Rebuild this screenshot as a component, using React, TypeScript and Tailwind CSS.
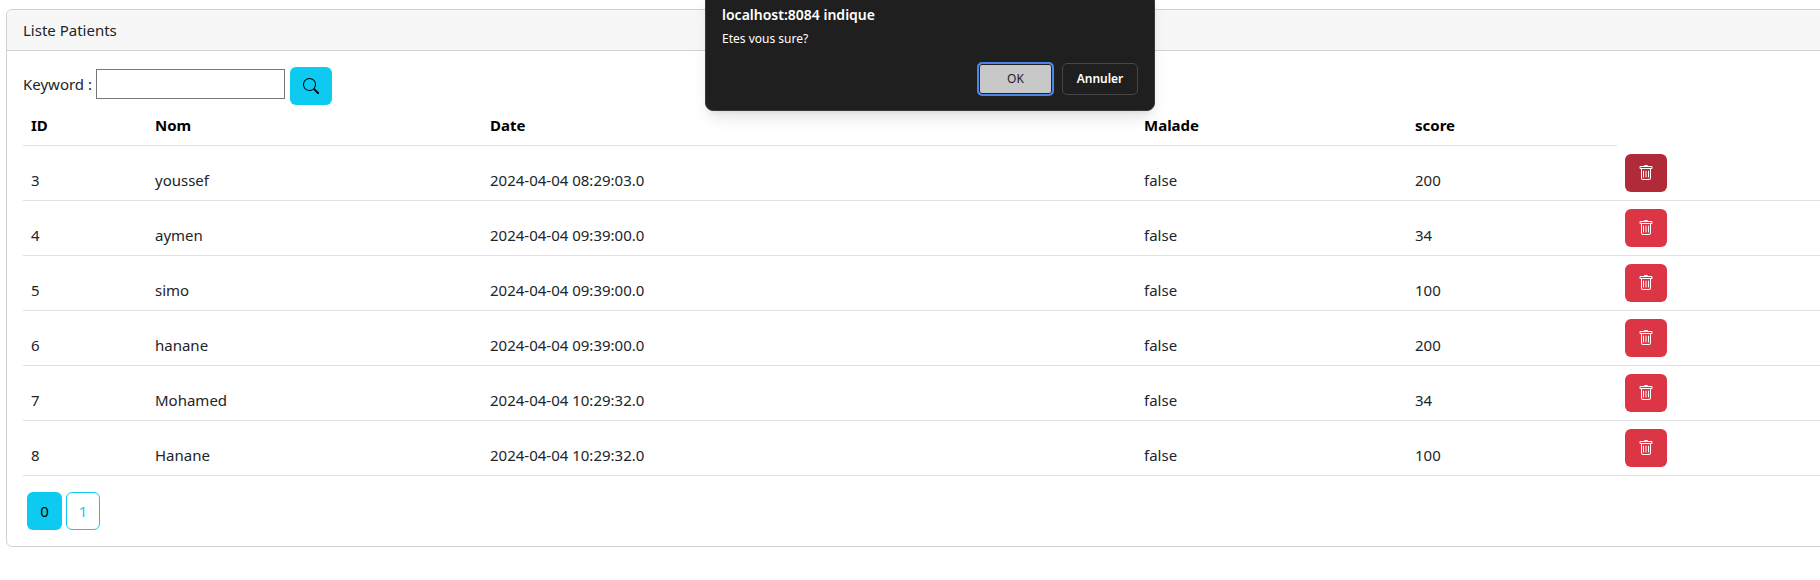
const patients = [
  { id: 3, nom: "youssef", date: "2024-04-04 08:29:03.0", malade: "false", score: 200 },
  { id: 4, nom: "aymen", date: "2024-04-04 09:39:00.0", malade: "false", score: 34 },
  { id: 5, nom: "simo", date: "2024-04-04 09:39:00.0", malade: "false", score: 100 },
  { id: 6, nom: "hanane", date: "2024-04-04 09:39:00.0", malade: "false", score: 200 },
  { id: 7, nom: "Mohamed", date: "2024-04-04 10:29:32.0", malade: "false", score: 34 },
  { id: 8, nom: "Hanane", date: "2024-04-04 10:29:32.0", malade: "false", score: 100 },
];

function TrashIcon() {
  return (
    <svg width="16" height="16" viewBox="0 0 16 16" fill="white">
      <path d="M5.5 5.5A.5.5 0 0 1 6 6v6a.5.5 0 0 1-1 0V6a.5.5 0 0 1 .5-.5m2.5 0a.5.5 0 0 1 .5.5v6a.5.5 0 0 1-1 0V6a.5.5 0 0 1 .5-.5m3 .5a.5.5 0 0 0-1 0v6a.5.5 0 0 0 1 0z" />
      <path d="M14.5 3a1 1 0 0 1-1 1H13v9a2 2 0 0 1-2 2H5a2 2 0 0 1-2-2V4h-.5a1 1 0 0 1-1-1V2a1 1 0 0 1 1-1H6a1 1 0 0 1 1-1h2a1 1 0 0 1 1 1h3.5a1 1 0 0 1 1 1zM4.118 4 4 4.059V13a1 1 0 0 0 1 1h6a1 1 0 0 0 1-1V4.059L11.882 4zM2.5 3h11V2h-11z" />
    </svg>
  );
}

function SearchIcon() {
  return (
    <svg width="16" height="16" viewBox="0 0 16 16" fill="black">
      <path d="M11.742 10.344a6.5 6.5 0 1 0-1.397 1.398h-.001q.044.06.098.115l3.85 3.85a1 1 0 0 0 1.415-1.414l-3.85-3.85a1 1 0 0 0-.115-.1zM12 6.5a5.5 5.5 0 1 1-11 0 5.5 5.5 0 0 1 11 0" />
    </svg>
  );
}

export default function App() {
  return (
    <div className="relative h-[580px] overflow-hidden bg-white pt-[9px] pl-[6px] font-['Noto_Sans',sans-serif] text-[15px] leading-6 text-[#212529]">
      {/* alert du navigateur */}
      <div className="absolute left-[705px] top-[-10px] z-10 h-[121px] w-[450px] rounded-lg border border-[#3a3a3a] bg-[#1f1f1f] shadow-lg">
        <div className="absolute left-[16px] top-[14px] text-sm font-semibold text-white">localhost:8084 indique</div>
        <div className="absolute left-[16px] top-[40px] text-xs text-white">Etes vous sure?</div>
        <div className="absolute right-[16px] top-[71px] flex items-center gap-2">
          <button className="h-[34px] w-[77px] rounded-[5px] border-2 border-[#4a86e8] bg-[#c8c8c8] text-xs text-[#1f1f1f] outline outline-1 -outline-offset-3 outline-[#1f1f1f]">OK</button>
          <button className="h-[32px] w-[76px] rounded-[5px] border border-[#464646] bg-[#1f1f1f] text-xs font-semibold text-white">Annuler</button>
        </div>
      </div>

      <div className="w-[1840px] rounded-md border border-[#d0d0d0]">
        <div className="h-[41px] rounded-t-md border-b border-[#d0d0d0] bg-[#f7f7f7] px-4 py-2">Liste Patients</div>
        <div className="p-4">
          <form className="flex items-center">
            <label className="mr-[4px] mb-[4px]">Keyword :</label>
            <input className="mb-[4px] h-[30px] w-[189px] border border-[#767676] bg-white" />
            <button type="button" className="ml-[5px] flex h-[38px] w-[42px] items-center justify-center rounded-md bg-[#0dcaf0]">
              <SearchIcon />
            </button>
          </form>
          <table className="w-full table-fixed border-collapse">
            <colgroup>
              <col className="w-[124px]" />
              <col className="w-[335px]" />
              <col className="w-[654px]" />
              <col className="w-[271px]" />
              <col className="w-[210px]" />
              <col />
            </colgroup>
            <thead>
              <tr>
                {["ID", "Nom", "Date", "Malade", "score"].map((h) => (
                  <th key={h} className="border-b border-[#dee2e6] p-2 text-left font-bold text-black">{h}</th>
                ))}
                <th />
              </tr>
            </thead>
            <tbody>
              {patients.map((p, i) => (
                <tr key={p.id} className="border-b border-[#dee2e6]">
                  <td className="p-2 align-bottom">{p.id}</td>
                  <td className="p-2 align-bottom">{p.nom}</td>
                  <td className="p-2 align-bottom">{p.date}</td>
                  <td className="p-2 align-bottom">{p.malade}</td>
                  <td className="p-2 align-bottom">{p.score}</td>
                  <td className="p-2 align-bottom">
                    <button className={`flex h-[38px] w-[42px] items-center justify-center rounded-md ${i === 0 ? "bg-[#b02a37]" : "bg-[#dc3545]"}`}>
                      <TrashIcon />
                    </button>
                  </td>
                </tr>
              ))}
            </tbody>
          </table>
          <ul className="mt-4 ml-[4px] flex gap-1">
            <li>
              <button className="h-[38px] w-[35px] rounded-md bg-[#0dcaf0] text-black">0</button>
            </li>
            <li>
              <button className="h-[38px] w-[34px] rounded-md border border-[#0dcaf0] text-[#0dcaf0]">1</button>
            </li>
          </ul>
        </div>
      </div>
    </div>
  );
}
